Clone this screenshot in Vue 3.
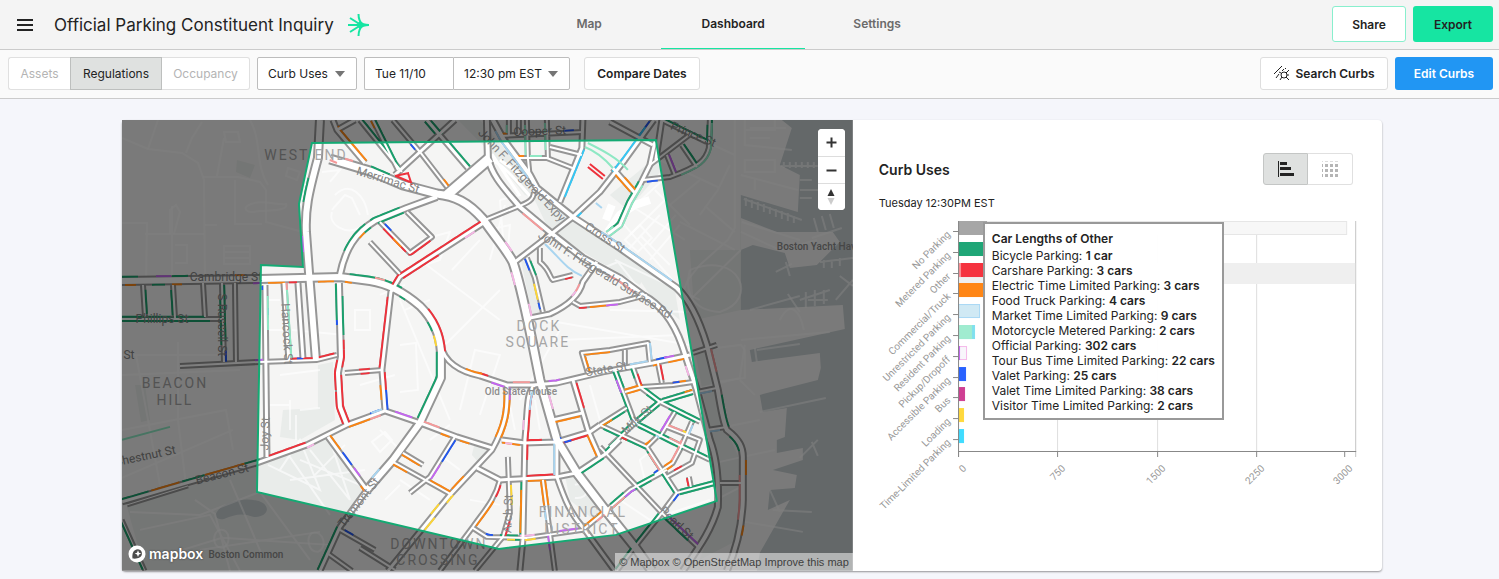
<script setup>
import { ref } from 'vue'

const tabs = ['Map', 'Dashboard', 'Settings']
const activeTab = ref('Dashboard')

const layers = ['Assets', 'Regulations', 'Occupancy']
const activeLayer = ref('Regulations')

const date = ref('Tue 11/10')
const view = ref('bars')

// study area outline
const area = 'M312 143L656 140L717 501L616 535L499 549L257 492L261 265L303 267L299 204Z'

// base map
const water =
  'M782 120L792 128L780 165L800 175L798 212L741 195L741 310L843 305L845 329L750 350L752 362L820 353L821 368L818 380L760 395L763 412L787 408L785 437L777 440L777 453L803 448L803 460L773 470L797 475L795 488L770 490L768 510L790 500L760 553L757 571H853V120Z'
const piers =
  'M741 218L777 232L833 232L840 242L817 265L790 268L785 253L753 245L741 250Z'
const parks = [
  'M127 507L257 464L328 439L366 488L320 571H145Z',
  'M530 190L575 218L622 250L645 275L640 285L600 262L550 232Z',
  'M318 365L333 362L335 420L300 440L280 437L283 410L318 408Z',
  'M458 120H480L530 178L540 200L525 195L488 150Z',
  'M620 250L675 290L680 320L650 295Z',
  'M521 260L527 262L543 312L532 314Z',
  'M564 470L575 474L605 510L600 525L570 500Z',
  'M695 350L708 348L722 420L740 460L738 540L700 560L722 500L712 440Z',
  'M475 442L490 448L480 464L472 455Z',
  'M237 160L255 165L250 178L236 172Z',
  'M135 385L145 385L150 420L141 422Z',
  'M690 250L741 250V310L695 320Z',
  'M610 195L655 158L662 170L628 210Z'
]

const lanes = [
  'M122 138L148 149L182 153L198 163L204 180L205 283',
  'M148 149L158 120M186 153L192 138L202 122',
  'M203 177H238L260 182L266 190V222L303 232',
  'M217 176L224 138M224 132L238 132L240 142L226 142Z',
  'M122 223H147L146 285M145 234H204M172 206V283',
  'M170 234V210L176 205L180 212L174 234',
  'M247 206C258 198 280 206 286 204C290 212 262 210 254 212C246 213 244 208 247 206',
  'M288 168L300 172L297 180L286 176ZM235 180V224H262M250 120C262 140 255 165 268 185',
  'M224 246H250V264H224ZM224 252H250M224 258H250M175 245H187V263H175M205 225H217',
  'M122 355H222M122 375L240 370M122 430L226 410L233 450M122 478L233 430M178 342V420L186 485M136 355L160 485',
  'M130 512L200 515L260 492L310 560M140 530L210 515L240 571M150 560L222 538L330 545M195 500L215 514L230 571M200 550L320 532M230 480L262 555',
  'M220 530C230 528 232 546 222 548C212 548 212 532 220 530M312 533C324 530 328 548 318 552C308 552 306 538 312 533',
  'M735 120V228L728 240L700 265L688 280L680 300M735 155L663 122M730 165L718 190L700 215M705 206L735 232M680 222L735 250M700 180L670 205M660 160L720 188',
  'M745 120V145L792 150M750 128H786M745 160V172H775V160ZM741 175L798 190M755 190V178M742 222L800 240M741 232L780 250L817 240M745 130H775V120M750 138H770',
  'M744 199L802 220M746 198V206M752 200V208M758 202V210M764 204V212M770 207V214M776 209V217M782 211V219M788 213V221M794 216V223',
  'M781 166H818M784 162V168M790 162V168M796 162V168M802 162V168M808 162V168M814 162V168M800 180H812M800 190H828M800 198H812',
  'M812 238L842 228M818 232L814 218M826 230L822 216M834 228L830 214M820 262L853 258M824 260V268M832 260V268M840 258V266M776 272L792 264M790 276L786 262',
  'M800 300L830 290M806 292V308M815 290V306M824 290V304M808 300H828M788 294L800 312M836 300L853 280M840 276L853 286',
  'M750 310L800 296M741 340L830 332M780 320C790 300 800 310 804 330M690 300L741 250M690 270C740 250 760 300 720 312C690 310 685 290 690 270',
  'M693 390L740 378L745 345M710 430L760 420M740 380L755 395M720 462L775 450M716 500L745 485M770 490L780 512M773 510L812 512M745 522L803 532M800 458L818 440M812 442L818 456M760 412L826 398',
  'M700 350L741 345L745 350V378L715 382M755 348L757 362M757 350L800 344',
  'M332 210L345 195L352 198L360 215M332 212C328 225 345 235 360 228M322 172L340 170L330 182M335 195C350 180 365 195 368 215',
  'M380 295L405 285M400 300L450 420M420 240L450 232L440 260L410 270M420 260L500 320M440 350L500 290M460 410L475 350L500 355L480 415',
  'M452 270L480 240M400 345L416 343L418 390L400 392M405 310L430 300M500 200L505 260M505 205L490 260M488 230L510 225L508 250',
  'M505 175L520 195L500 200M520 400L560 330M545 320L690 345M560 340L680 335M615 260L700 300M610 310L690 312M598 270L618 262L640 290',
  'M620 220L690 300M630 205L685 240M640 235L670 265M628 250L660 215M650 260L680 225M625 240L640 225L652 238L638 252Z',
  'M655 190L690 225M665 200L630 235M663 180L625 215M676 215L650 245',
  'M292 330L345 335M262 300H280M265 330H285M267 405H290M300 410L320 408M280 375L320 370M290 400V430M296 415V440',
  'M268 465L320 490L300 440L280 470M310 450L350 500L330 440M290 480L365 470M315 475L345 445M300 460L360 485M285 450L330 515',
  'M355 310H370V330H355ZM360 385L395 375M380 430L400 450L390 470M372 442L385 432L392 440L380 452ZM400 480L430 500M385 500L400 485',
  'M430 440L450 425M440 455L460 470M510 405L515 430M535 400L540 430M590 385L600 420M470 500L500 505M480 520L490 500',
  'M640 460L652 450L660 470L645 480ZM620 500L650 520L710 500M575 485C590 480 592 500 575 498'
]

// [centre line, width]
const roads = [
  ['M320 120L318 158C308 195 305 210 306 232L309 272L316 360', 10],
  ['M122 281L260 279L340 277L370 281C390 284 405 293 420 306C434 320 440 335 441 352V378L420 423L393 460L367 490', 10],
  ['M340 275C345 250 355 233 375 221L407 208L437 197', 8],
  ['M330 159L370 171L403 185L437 194C455 196 468 202 483 219C500 243 508 252 513 262C521 285 526 312 533 345L540 380L557 440L577 473L603 507L635 547L652 571', 11],
  ['M490 158L447 195', 13],
  ['M487 120L488 158C493 178 506 190 520 207L550 232L583 258L620 278L643 295C660 304 674 322 682 345L697 390L710 440C717 458 719 480 718 507C712 530 698 549 683 571', 8],
  ['M493 120L504 140L530 175L537 188L573 217L620 248L677 288C690 300 700 322 707 345L718 390C722 415 724 424 727 430C740 440 743 448 743 457V500C742 530 735 553 727 571', 8],
  ['M333 120L337 130L365 163M337 130L355 120', 7],
  ['M360 120L402 172M373 120L398 170M393 120L420 152L447 187', 6],
  ['M427 120L468 168M455 120L420 152L395 175', 7],
  ['M583 120L582 148L560 202', 7],
  ['M527 120L528 158L530 178M547 120L548 158M500 136L583 132M509 120V135M519 120V135', 6],
  ['M517 158H547L575 169M550 147L582 155', 6],
  ['M515 262L550 235L573 217L600 192L625 160L654 120', 7],
  ['M485 220L517 207C528 203 534 200 534 192', 6],
  ['M485 222L400 277L391 292L382 370L385 410', 7],
  ['M370 242L400 274M380 222L410 253L432 237L407 212', 6],
  ['M527 258L535 278L543 312M540 248V262C550 270 550 278 553 280L573 275', 6],
  ['M530 318L550 314C570 305 580 294 583 282L597 262', 7],
  ['M573 302L580 306L620 302L647 295', 6],
  ['M655 142L650 165L640 185L630 202L620 225L608 234M662 120L656 160', 7],
  ['M613 168L635 193M610 122L653 145', 7],
  ['M662 120L707 142M710 120L709 148C706 160 700 166 670 177L643 180', 6],
  ['M692 133L650 165M682 145L697 167M667 155L675 175', 6],
  ['M143 285L145 317M173 285L175 318M203 283L205 317M122 319H222M222 283L224 362M235 283L236 362', 6],
  ['M180 366L260 362L317 360L337 355', 6],
  ['M265 285L267 457M284 283L289 362M298 283L303 358', 7],
  ['M339 283L341 357L338 373L340 407L347 425', 8],
  ['M345 373L382 370', 6],
  ['M122 502L180 485L257 463L307 445L347 425L385 411L420 423L457 437L492 448', 7],
  ['M122 520L145 571M127 505L188 486', 5],
  ['M328 437L367 490L340 527L320 571', 7],
  ['M340 530L375 550M327 553L352 571M360 548L395 570', 6],
  ['M441 345C444 362 460 372 480 376L507 385L533 385L557 383L603 372L653 363L690 355', 7],
  ['M507 385C508 410 506 425 492 450L450 495L388 571', 7],
  ['M535 385C526 392 528 410 525 440L523 540L520 571', 7],
  ['M502 440L525 443L557 442L590 432L600 425', 7],
  ['M573 380L588 430L600 457M553 420L583 413', 7],
  ['M403 453L423 465M393 462L452 495M455 437L430 477L410 493', 6],
  ['M477 468L500 480L557 477L577 473L607 453L620 440', 7],
  ['M500 480C495 500 485 510 473 527L440 571M473 528L487 537L527 538L583 530L607 510L630 490L667 470', 6],
  ['M508 457L510 513L503 537L475 571M543 480L555 571', 6],
  ['M557 443V477C565 500 570 513 585 530L615 571', 7],
  ['M588 373L582 353L610 350L648 343L650 363M625 350V365', 6],
  ['M633 367L640 387L660 402L700 422M658 363L662 383M625 392L642 387L673 385L693 382', 6],
  ['M615 370L635 423M693 392L660 402L635 423L610 447M635 423L683 447L710 460', 6],
  ['M600 425L627 408M600 425L647 447L657 437M647 447L677 493L715 483', 6],
  ['M675 412L660 437M692 422L680 450L673 463L655 475M667 427L700 440L692 463L667 477', 6],
  ['M600 447L662 513L698 547M677 493L662 513L635 547L617 571', 6],
  ['M693 353L717 345M697 392L717 388M707 430L727 427M720 483H742M689 477L691 487', 6]
]

// curb rules, drawn along the kerb lines
const curbs = {
  green: [
    'M122 277H138M172 277L188 276M152 285L165 286M309 178L304 202M366 225C353 236 350 245 347 252M372 229C364 238 360 246 357 253',
    'M362 120L393 158M372 122L402 168M425 120L436 133M432 120L442 134M448 142L469 168M370 220L400 208M378 223L404 213M371 167L390 174',
    'M350 272C390 276 395 284 402 288M398 299C412 309 424 322 430 332M336 284L337 320M344 296V335M436 352V372L418 418',
    'M143 290L146 314M173 290L175 315M220 300L221 345M225 285L226 340M122 317H205M122 321H210M664 120L707 140M712 120V140M683 145L696 165',
    'M530 261L534 276M535 270L537 258M642 183L612 232M521 482L522 535M583 495L600 482M579 477L605 460M601 424L625 412M603 430L645 451',
    'M613 372L632 420M616 368L623 388M632 368L636 378M644 386L700 420M648 393L658 401M692 390L662 398M693 394L664 402M657 402L637 419M661 407L638 428',
    'M630 424L618 436M638 422L680 442M638 427L682 451M604 450L618 440M645 453L674 493M680 490L714 481M680 494L714 485',
    'M610 508L650 478M668 466L636 482M610 504L624 493M644 449L628 444M667 412L693 427M684 446L706 459',
    'M659 514L610 570M665 517L688 541M721 395L726 428M731 435L743 450M705 142L710 125M122 501L149 493M183 484L205 477M245 466L260 460M122 518L140 571M338 527L319 571M656 518L640 536M500 536L518 535M508 541L520 540'
  ],
  red: [
    'M485 220L440 246L398 276M438 254L403 278M390 297L383 345L381 368M386 300L380 350M384 228L406 252M408 255L430 240M400 277L391 285',
    'M427 310C438 320 442 335 446 352M269 457L306 444M290 362L335 356M292 358L320 358M344 350L345 368M337 360V390M341 375V390L347 424M336 392L343 424M359 370H370M361 378H370',
    'M565 278L572 276M580 307L587 307M387 372L386 390M529 415L527 460M531 395L529 425M528 440H542M563 440L588 434M565 446L587 436M576 383L584 408',
    'M527 477L555 475M500 485L494 496M512 522L508 537M637 374L642 386M660 365L663 380M620 440L626 443M675 472L683 468M688 478L690 486M478 374L488 377M341 340V350M289 282H297'
  ],
  orange: [
    'M125 286H136M172 284H182M235 275H245M268 283L285 282M318 281L334 280M345 281L352 282M366 234L362 240M393 239L401 247M443 180L448 186M517 158L524 157M546 246L562 266M590 307L612 304',
    'M614 172L630 192M624 178L635 192M338 126L365 162M344 130L360 152M512 156H524M505 390C505 410 506 425 498 438M509 395C510 410 508 425 502 438M502 444L520 445M466 369L482 375M441 433L450 436',
    'M553 423L580 416M589 435L597 456M583 354L610 350M583 357L588 372M625 391L642 386M627 395L640 390M673 384L686 381M685 393L693 391M668 361L684 358M400 455L420 465M393 464L408 471M430 481L450 493',
    'M453 490L466 478M492 500L475 525M541 482L547 505M546 480L551 505M522 490L523 533M528 481L543 480M609 510L585 526M644 446L650 440M665 467L675 461M663 470L672 465M349 427L370 418M328 437L340 450M362 485L367 490M370 121L375 128M600 430L615 424M180 484L152 493M205 475L245 466M743 460L744 475M741 525L739 535M500 136L507 135M383 385V400M461 438L470 442M653 365H660'
  ],
  blue: [
    'M305 120L314 132M411 144L415 150M384 225L390 232M527 258L531 270M538 303L541 309M265 286V290M266 308V315M297 358H303M338 320V325M386 390L387 410M370 413L380 412',
    'M448 454L455 440M450 451L444 463M553 440H562M565 444L572 442M343 452L352 465M487 532L493 537M647 181L658 181M648 120L638 135M656 359L667 357M673 384H680M618 440L612 447M672 500L680 495M345 530L353 536M480 552L472 565M500 566L508 558M563 128L574 131M636 120L630 133M225 350V362M654 473H660'
  ],
  purple: [
    'M156 275H171M303 236L304 252M253 283H262M255 362H263M395 412L412 418M440 465L430 478M549 383L560 380M511 387V400M354 468L360 476M668 155L676 172M663 432L671 416M664 357L674 355M626 498L636 490M560 534L578 529M550 535L552 550M667 517L698 545M606 303H618M492 381L505 385M616 380L621 393'
  ],
  pink: [
    'M465 238L475 232M505 242L511 252M512 272L516 285M528 304L532 316M307 448L314 444M546 395L550 410M689 365L691 375M505 445L512 446M523 420V430M577 285L574 298M389 128L394 138M520 537L535 536'
  ],
  salmon: [
    'M345 159L353 161M523 213L543 230M375 278L385 280M610 274L635 290M577 292L582 285M420 420L440 427M513 384L530 382M668 425L683 431M670 437L683 442M682 440L675 462M651 452L660 475M610 505L625 497M370 418L380 413M284 283L286 290M708 350L716 372M743 475L740 520M130 515L134 530M616 512L600 525'
  ],
  mint: [
    'M287 290L291 358M270 296V330M640 184L632 205L620 226L608 234M525 125V155M530 157H542M606 235L614 227M710 123V145C707 160 700 165 680 172M547 123V150M506 125V133'
  ],
  sky: [
    'M494 132L528 178M602 231L620 244M620 244L672 281M371 412L382 409M556 443V475M704 330L716 345L712 388M649 343V360M372 478L378 468M630 365L648 362M694 395L712 390M707 432L720 429M655 437L662 433M690 424L688 436M531 388L529 410M546 510L548 520'
  ],
  cyan: ['M585 150L565 197M645 127L625 156M578 217L582 213M640 140L613 172'],
  yellow: ['M534 284L537 300M433 336L436 346M510 485L511 505M453 495L447 503M434 517L425 530M683 431L686 434M507 543L515 542M525 541L536 540M440 505L432 515']
}

// rules that sit off the kerb lines
const extras = {
  red: 'M588 167L603 179M590 164L605 176M395 176L409 173M408 173L412 185M396 176L410 182',
  mint: 'M588 143C602 150 618 158 628 170M585 147C598 152 606 160 613 168M122 440L170 427',
  sky: 'M545 244C560 258 565 268 582 276M596 203L602 208',
  salmon: 'M330 160L337 163'
}

const parsePath = (d) => {
  const lines = []
  const tokens = d.match(/[A-Z]|[\d.]+/g)
  let line, x, y, cmd
  for (let i = 0; i < tokens.length; ) {
    if (/[A-Z]/.test(tokens[i])) cmd = tokens[i++]
    const n = () => Number(tokens[i++])
    if (cmd == 'C') {
      const [x1, y1, x2, y2, x3, y3] = [n(), n(), n(), n(), n(), n()]
      for (let k = 1; k <= 8; k++) {
        const t = k / 8
        const u = 1 - t
        line.push([
          u * u * u * x + 3 * u * u * t * x1 + 3 * u * t * t * x2 + t * t * t * x3,
          u * u * u * y + 3 * u * u * t * y1 + 3 * u * t * t * y2 + t * t * t * y3
        ])
      }
      x = x3
      y = y3
      continue
    }
    if (cmd != 'V') x = n()
    if (cmd != 'H') y = n()
    if (cmd == 'M') {
      line = []
      lines.push(line)
    }
    line.push([x, y])
  }
  return lines
}

const streets = roads.flatMap(([d, width]) => parsePath(d).map((line) => ({ line, width })))

const nearest = (line, [px, py]) => {
  let best = { dist: Infinity }
  for (let i = 1; i < line.length; i++) {
    const [ax, ay] = line[i - 1]
    const dx = line[i][0] - ax
    const dy = line[i][1] - ay
    const len = Math.hypot(dx, dy)
    const t = Math.min(1, Math.max(0, ((px - ax) * dx + (py - ay) * dy) / (len * len)))
    const x = ax + dx * t
    const y = ay + dy * t
    const dist = Math.hypot(px - x, py - y)
    if (dist < best.dist) {
      const nx = -dy / len
      const ny = dx / len
      best = { dist, x, y, nx, ny, side: (px - x) * nx + (py - y) * ny }
    }
  }
  return best
}

// puts a curb rule on the kerb of the street next to it
const snap = (line) => {
  const points = [line[0]]
  for (let i = 1; i < line.length; i++) {
    const [ax, ay] = line[i - 1]
    const [bx, by] = line[i]
    const steps = Math.ceil(Math.hypot(bx - ax, by - ay) / 4)
    for (let k = 1; k <= steps; k++) {
      points.push([ax + ((bx - ax) * k) / steps, ay + ((by - ay) * k) / steps])
    }
  }
  let best = { worst: Infinity }
  for (const street of streets) {
    const hits = points.map((p) => nearest(street.line, p))
    const worst = Math.max(...hits.map((h) => h.dist))
    if (worst < best.worst) best = { worst, hits, width: street.width }
  }
  if (best.worst > 8) {
    return line.length > 2 ? line.slice(1).map((p, i) => snap([line[i], p])).join('') : ''
  }
  const side = Math.sign(best.hits.reduce((sum, h) => sum + h.side, 0)) || 1
  const off = side * (best.width / 2 - 0.9)
  return 'M' + best.hits.map((h) => `${(h.x + h.nx * off).toFixed(1)} ${(h.y + h.ny * off).toFixed(1)}`).join('L')
}

const curbPaths = Object.entries(curbs).map(([name, paths]) => ({
  name,
  d: paths.flatMap(parsePath).map(snap).join('')
}))

const places = [
  { text: 'WEST END', x: 306, y: 160, type: 'district' },
  { text: 'DOCK', x: 539, y: 331, type: 'district' },
  { text: 'SQUARE', x: 538, y: 347, type: 'district' },
  { text: 'BEACON', x: 175, y: 388, type: 'district' },
  { text: 'HILL', x: 175, y: 405, type: 'district' },
  { text: 'FINANCIAL', x: 583, y: 517, type: 'district' },
  { text: 'DISTRICT', x: 582, y: 534, type: 'district' },
  { text: 'DOWNTOWN', x: 439, y: 549, type: 'district' },
  { text: 'CROSSING', x: 438, y: 565, type: 'district' },
  { text: 'Boston Yacht Haven', x: 822, y: 250, type: 'poi' },
  { text: 'Old State House', x: 521, y: 395, type: 'poi' },
  { text: 'Boston Common', x: 246, y: 558, type: 'poi' },
  { text: 'Cambridge St', x: 226, y: 281, type: 'street' },
  { text: 'Phillips St', x: 162, y: 323, type: 'street' },
  { text: 'St', x: 129, y: 359, type: 'street' },
  { text: 'Merrimac St', x: 387, y: 184, type: 'street', turn: 17 },
  { text: 'Joy St', x: 269, y: 434, type: 'street', turn: -88 },
  { text: 'Beacon St', x: 223, y: 478, type: 'street', turn: -14 },
  { text: 'Chestnut St', x: 146, y: 460, type: 'street', turn: -12 },
  { text: 'Hancock St', x: 283, y: 334, type: 'street', turn: 87 },
  { text: 'S Russell St', x: 218, y: 325, type: 'street', turn: 90 },
  { text: 'Tremont St', x: 362, y: 505, type: 'street', turn: -52 },
  { text: 'Arch St', x: 512, y: 514, type: 'street', turn: -88 },
  { text: 'State St', x: 607, y: 373, type: 'street', turn: -9 },
  { text: 'Milk St', x: 640, y: 423, type: 'street', turn: -42 },
  { text: 'Cooper St', x: 540, y: 135, type: 'street', turn: -2 },
  { text: 'Prince St', x: 692, y: 138, type: 'street', turn: 22 },
  { text: 'Pearl St', x: 674, y: 526, type: 'street', turn: 44 },
  { text: 'Cross St', x: 603, y: 241, type: 'street', turn: 33 },
  { text: 'John F. Fitzgerald Expy', x: 519, y: 178, type: 'street', turn: 47 },
  { text: 'John F. Fitzgerald Surface Rd', x: 603, y: 278, type: 'street', turn: 32 }
]

const uses = [
  { name: 'No Parking', parts: [[388, '#f7f7f7', '#e6e6e6'], [28, '#a6a6a6']] },
  { name: 'Metered Parking', parts: [[70, '#cfe6ef'], [27, '#1fa677']] },
  { name: 'Other', parts: [[42, '#f9b3a6'], [27, '#f5333f'], [2, '#fa8f94']] },
  { name: 'Commercial/Truck', parts: [[42, '#f9b3a6'], [27, '#ff8616']] },
  { name: 'Unrestricted Parking', parts: [[21, '#d0e9f4', '#a9d8f5']] },
  { name: 'Resident Parking', parts: [[16, '#7fe0ef'], [13, '#a0ecd0']] },
  { name: 'Pickup/Dropoff', parts: [[8, '#f8f6fb', '#f5b9ea'], [1, '#c466f0']] },
  { name: 'Accessible Parking', parts: [[7, '#2962ff']] },
  { name: 'Bus', parts: [[6, '#cf3f93']] },
  { name: 'Loading', parts: [[5, '#ffd93d']] },
  { name: 'Time-Limited Parking', parts: [[5, '#40dcff']] }
]

const rowY = (i) => Math.round(221 + i * 20.8)

const ticks = [
  { label: '0', x: 958 },
  { label: '750', x: 1057 },
  { label: '1500', x: 1157 },
  { label: '2250', x: 1256 },
  { label: '3000', x: 1344 }
]

const other = [
  ['Bicycle Parking', '1 car'],
  ['Carshare Parking', '3 cars'],
  ['Electric Time Limited Parking', '3 cars'],
  ['Food Truck Parking', '4 cars'],
  ['Market Time Limited Parking', '9 cars'],
  ['Motorcycle Metered Parking', '2 cars'],
  ['Official Parking', '302 cars'],
  ['Tour Bus Time Limited Parking', '22 cars'],
  ['Valet Parking', '25 cars'],
  ['Valet Time Limited Parking', '38 cars'],
  ['Visitor Time Limited Parking', '2 cars']
]
</script>

<template>
  <div class="page">
    <header class="topbar">
      <div class="brand">
        <button class="menu" aria-label="Menu">
          <svg width="18" height="14" viewBox="0 0 18 14"><path d="M1 2H17M1 7H17M1 12H17" /></svg>
        </button>
        <h1>Official Parking Constituent Inquiry</h1>
        <svg class="logo" width="22" height="22" viewBox="0 0 22 22">
          <path d="M0 11H16M2 4L13 11L2 18M10.500 0C10.500 5 11.500 8 15 11C11.500 14 10.500 17 10.500 22" />
          <path class="tip" d="M8 11L12 7C14 9 17 10 21 10V12C17 12 14 13 12 15Z" />
        </svg>
      </div>
      <nav>
        <a v-for="tab in tabs" :key="tab" href="#" :class="{ active: tab == activeTab }" @click.prevent="activeTab = tab">{{ tab }}</a>
      </nav>
      <div class="actions">
        <button class="share">Share</button>
        <button class="export">Export</button>
      </div>
    </header>

    <div class="toolbar">
      <div class="segment">
        <button v-for="layer in layers" :key="layer" :class="{ active: layer == activeLayer }" @click="activeLayer = layer">{{ layer }}</button>
      </div>
      <div class="picker uses">
        <select aria-label="Layer"><option>Curb Uses</option></select>
        <svg width="10" height="6" viewBox="0 0 10 6"><path d="M0 0H10L5 6Z" /></svg>
      </div>
      <div class="when">
        <input v-model="date" aria-label="Date" type="text" />
        <div class="picker time">
          <select aria-label="Time"><option>12:30 pm EST</option></select>
          <svg width="10" height="6" viewBox="0 0 10 6"><path d="M0 0H10L5 6Z" /></svg>
        </div>
      </div>
      <button class="plain compare">Compare Dates</button>
      <button class="plain search">
        <svg width="16" height="16" viewBox="0 0 16 16">
          <path d="M0 9L8 1M2 13L5 9M8 6L10 4M11 4L12 3" />
          <circle cx="10" cy="10" r="3" />
          <path d="M12 12L15 15M8 12L6 15M7 8L5 7M12 8L15 5M13 10H15" />
        </svg>
        Search Curbs
      </button>
      <button class="edit">Edit Curbs</button>
    </div>

    <main>
      <section class="card">
        <div class="map">
          <svg class="canvas" viewBox="122 120 731 451" preserveAspectRatio="xMidYMid slice">
            <rect class="land" x="122" y="120" width="731" height="451" />
            <path v-for="park in parks" :key="park" class="park" :d="park" />
            <path class="water" :d="water" />
            <path class="land" :d="piers" />
            <path class="water" d="M216 514C222 500 250 496 263 503C272 510 264 518 254 517C242 513 236 514 224 519C218 520 215 518 216 514Z" />
            <path v-for="lane in lanes" :key="lane" class="lane" :d="lane" />
            <path class="ramp" d="M488 158C505 165 520 185 530 196M492 154L520 196M500 160L535 185" />
            <path class="ramp wide" d="M608 232L620 215L635 205L650 200M612 205L606 220" />
            <path v-for="road in roads" :key="road[0]" class="kerb" :d="road[0]" :stroke-width="road[1]" />
            <path v-for="curb in curbPaths" :key="curb.name" :class="['curb', curb.name]" :d="curb.d" />
            <path v-for="road in roads" :key="road[0]" class="surface" :d="road[0]" :stroke-width="road[1] - 4" />
            <path v-for="(d, name) in extras" :key="name" :class="['curb', name]" :d="d" />
            <text
              v-for="place in places"
              :key="place.text"
              :class="place.type"
              :x="place.x"
              :y="place.y"
              :transform="place.turn ? `rotate(${place.turn} ${place.x} ${place.y})` : null"
            >{{ place.text }}</text>
            <path class="shade" :d="'M122 120H853V571H122Z' + area" />
            <path class="outline" :d="area" />
          </svg>

          <div class="zoom">
            <button aria-label="Zoom in"><svg width="11" height="11" viewBox="0 0 11 11"><path d="M5.5 0.5V10.5M0.5 5.5H10.5" /></svg></button>
            <button aria-label="Zoom out"><svg width="11" height="11" viewBox="0 0 11 11"><path d="M0.5 5.5H10.5" /></svg></button>
            <button aria-label="Reset north">
              <svg width="8" height="16" viewBox="0 0 8 16"><path class="north" d="M4 0L7.5 7H.5Z" /><path class="south" d="M4 16L7.5 9H.5Z" /></svg>
            </button>
          </div>

          <a class="mapbox" href="#">
            <svg width="18" height="18" viewBox="0 0 18 18">
              <circle cx="9" cy="9" r="8.5" />
              <path class="drop" d="M4.500 13.500C4 9 5 4.500 10 4.300C15 5 15 11 11.500 12.600C9.500 13.700 7 13.800 4.500 13.500Z" />
              <path class="star" d="M10 5.300L11 7.700L13.300 8.600L11 9.600L10 12L9 9.600L6.700 8.600L9 7.700Z" />
            </svg>
            <span>mapbox</span>
          </a>

          <div class="credits">
            <a href="#">© Mapbox</a> <a href="#">© OpenStreetMap</a> <a href="#">Improve this map</a>
          </div>
        </div>

        <div class="panel">
          <div class="panel-head">
            <h2>Curb Uses</h2>
            <div class="toggle">
              <button aria-label="Bar chart" :class="{ active: view == 'bars' }" @click="view = 'bars'">
                <svg width="18" height="18" viewBox="0 0 18 18"><path class="bars" d="M1 1H2V17H1ZM3 2H10V5H3ZM3 7H14V10H3ZM3 13H17V16H3Z" /></svg>
              </button>
              <button aria-label="Heat map" :class="{ active: view == 'grid' }" @click="view = 'grid'">
                <svg width="16" height="16" viewBox="0 0 16 16">
                  <path class="dots" d="M0 4.500H16M0 9.500H16M0 14.500H16" />
                  <path class="dots faint" d="M0 .5H16" />
                </svg>
              </button>
            </div>
          </div>
          <p class="moment">Tuesday 12:30PM EST</p>

          <div class="chart">
            <svg viewBox="853 214 529 300">
              <g class="grid">
                <path d="M1057.500 221V451M1157.500 221V451M1256.500 221V451" />
                <path class="last" d="M1355.500 221V457" />
              </g>
              <rect class="hover" x="958" y="263" width="397" height="21" />
              <g v-for="(use, i) in uses" :key="use.name">
                <rect
                  v-for="part in use.parts"
                  :key="part[0]"
                  x="958.5"
                  :y="rowY(i) + .5"
                  :width="part[0]"
                  height="13"
                  :fill="part[1]"
                  :stroke="part[2] || part[1]"
                />
                <path class="tick" :d="`M953 ${rowY(i) + 10.5}H958`" />
                <text x="951" :y="rowY(i) + 14" :transform="`rotate(-45 951 ${rowY(i) + 14})`">{{ use.name }}</text>
              </g>
              <path class="axis" d="M958.500 221V457M958 451.500H1356" />
              <g v-for="tick in ticks" :key="tick.label">
                <path class="tick" :d="`M${tick.x + .5} 451V457`" />
                <text :x="tick.x + 9" y="469" :transform="`rotate(-45 ${tick.x + 9} 469)`">{{ tick.label }}</text>
              </g>
            </svg>
            <div class="tooltip">
              <h3>Car Lengths of Other</h3>
              <p v-for="row in other" :key="row[0]">{{ row[0] }}: <b>{{ row[1] }}</b></p>
            </div>
          </div>
        </div>
      </section>
    </main>
  </div>
</template>

<style>
body {
  background: #f5f6fb;
}
</style>

<style scoped>
.page,
.page button,
.page input,
.page select {
  font-family: Inter, 'Liberation Sans', sans-serif;
  font-size: 12px;
  color: #232323;
}

.page * {
  box-sizing: border-box;
}

h1,
h2,
h3,
p {
  margin: 0;
}

button {
  padding: 0;
  cursor: pointer;
}

.topbar {
  display: grid;
  grid-template-columns: 34.5% auto 1fr;
  height: 50px;
  background: #f4f4f4;
  border-bottom: 1px solid #cbcbcb;
}

.brand {
  display: flex;
  align-items: center;
  padding-left: 16px;
}

.menu {
  display: flex;
  margin-right: 20px;
  border: none;
  background: none;
}

.menu svg {
  stroke: #232323;
  stroke-width: 2;
}

.page h1 {
  font-size: 17px;
  font-weight: 400;
  white-space: nowrap;
}

.logo {
  margin-left: 14px;
  fill: none;
  stroke: #16e5a2;
  stroke-width: 2;
}

.logo .tip {
  fill: #16e5a2;
  stroke: none;
}

nav {
  display: flex;
}

nav a {
  width: 144px;
  line-height: 48px;
  text-align: center;
  font-weight: 600;
  color: #6b6b6b;
  text-decoration: none;
}

nav a.active {
  color: #232323;
  border-bottom: 1px solid #16e5a2;
}

.actions {
  display: flex;
  justify-content: flex-end;
  gap: 7px;
  padding: 6px 6px 7px;
}

.actions button {
  border-radius: 3px;
  font-weight: 600;
}

.actions .share {
  width: 74px;
  background: #fff;
  border: 1px solid #88efcd;
}

.actions .export {
  width: 80px;
  background: #16e5a2;
  border: none;
}

.toolbar {
  display: flex;
  align-items: center;
  height: 49px;
  padding: 0 6px 2px 8px;
  background: #fafafa;
  border-bottom: 1px solid #cbcbcb;
}

.segment {
  display: flex;
  margin-right: 7px;
}

.segment button {
  width: 88px;
  height: 33px;
  background: #fff;
  border: 1px solid #e0e0e0;
  color: #b4b4b4;
}

.segment button:first-child {
  width: 62px;
  border-radius: 3px 0 0 3px;
  border-right: none;
}

.segment button:last-child {
  border-radius: 0 3px 3px 0;
  border-left: none;
}

.segment button.active {
  width: 92px;
  background: #dfe1e0;
  border-color: #bdbfbe;
  color: #232323;
}

.picker {
  position: relative;
}

.picker svg {
  position: absolute;
  right: 12px;
  top: 14px;
  fill: #757575;
  pointer-events: none;
}

.picker select,
.when input {
  width: 100%;
  height: 33px;
  padding: 0 10px;
  appearance: none;
  background: #fff;
  border: 1px solid #bdbdbd;
  border-radius: 2px;
}

.uses {
  width: 100px;
  margin-right: 7px;
}

.when {
  display: flex;
  margin-right: 14px;
}

.when input {
  width: 89px;
  border-right: none;
  border-radius: 2px 0 0 2px;
}

.time {
  width: 117px;
}

.time select {
  border-radius: 0 2px 2px 0;
}

.plain {
  height: 33px;
  background: #fff;
  border: 1px solid #dedede;
  border-radius: 3px;
  font-weight: 600;
}

.compare {
  width: 116px;
}

.search {
  display: flex;
  align-items: center;
  justify-content: center;
  gap: 6px;
  width: 128px;
  margin-left: auto;
  margin-right: 7px;
}

.search svg {
  fill: none;
  stroke: #232323;
}

.toolbar .edit {
  width: 98px;
  height: 33px;
  background: #2196f3;
  border: none;
  border-radius: 3px;
  color: #fff;
  font-weight: 600;
}

main {
  padding: 21px 117px 8px 122px;
}

.card {
  display: flex;
  background: #fff;
  border-radius: 4px;
  box-shadow: 0 1px 2px rgba(0, 0, 0, 0.4);
}

.map {
  position: relative;
  width: 58%;
  overflow: hidden;
}

.canvas {
  display: block;
  width: 100%;
  height: 100%;
}

.land {
  fill: #f5f5f4;
}

.park {
  fill: #e9ecea;
}

.water {
  fill: #c8d0d3;
}

.lane {
  fill: none;
  stroke: #fff;
  stroke-opacity: 0.6;
  stroke-width: 2;
}

.ramp {
  fill: none;
  stroke: #fff;
  stroke-width: 3;
}

.ramp.wide {
  stroke-width: 8;
}

.kerb,
.surface {
  fill: none;
  stroke: #969696;
  stroke-linejoin: round;
}

.surface {
  stroke: #fff;
}

.curb {
  fill: none;
  stroke-width: 2;
}

.green {
  stroke: #1aa06d;
}

.red {
  stroke: #ee323c;
}

.orange {
  stroke: #f98514;
}

.blue {
  stroke: #2257ee;
}

.purple {
  stroke: #c466f0;
}

.pink {
  stroke: #f4b6e4;
}

.salmon {
  stroke: #f59a9a;
}

.mint {
  stroke: #8fe8c4;
}

.sky {
  stroke: #a9d5f0;
}

.cyan {
  stroke: #35c7f5;
}

.yellow {
  stroke: #fdd535;
}

.canvas text {
  font-family: Roboto, 'Liberation Sans', sans-serif;
  text-anchor: middle;
}

.district {
  font-size: 14px;
  letter-spacing: 2px;
  fill: #a6a6a6;
}

.poi {
  font-size: 10px;
  font-weight: 500;
  fill: #8c8c8c;
}

.street {
  font-size: 12px;
  fill: #858585;
}

.shade {
  fill: rgba(0, 0, 0, 0.5);
  fill-rule: evenodd;
}

.outline {
  fill: none;
  stroke: #14aa73;
  stroke-width: 2;
}

.zoom {
  position: absolute;
  top: 9px;
  right: 8px;
  width: 27px;
  border-radius: 4px;
  overflow: hidden;
  background: #fff;
}

.zoom button {
  display: flex;
  align-items: center;
  justify-content: center;
  width: 27px;
  height: 27px;
  background: #fff;
  border: none;
  border-top: 1px solid #ddd;
}

.zoom button:first-child {
  border-top: none;
}

.zoom svg {
  stroke: #333;
  stroke-width: 2;
}

.zoom .north {
  fill: #333;
  stroke: none;
}

.zoom .south {
  fill: #ccc;
  stroke: none;
}

.mapbox {
  position: absolute;
  left: 6px;
  bottom: 8px;
  display: flex;
  align-items: center;
  gap: 3px;
  color: #fff;
  font-size: 14px;
  font-weight: 600;
  line-height: 18px;
  text-decoration: none;
  text-shadow: 0 0 2px #333;
}

.mapbox circle,
.mapbox .star {
  fill: #fff;
}

.mapbox .drop {
  fill: #4c4c4c;
}

.credits {
  position: absolute;
  right: 0;
  bottom: 0;
  padding: 0 4px;
  background: rgba(255, 255, 255, 0.5);
  font-family: 'Liberation Sans', sans-serif;
  font-size: 11px;
  line-height: 18px;
}

.credits a {
  color: #404040;
  text-decoration: none;
}

.panel {
  flex: 1;
  min-width: 0;
}

.panel-head {
  display: flex;
  align-items: center;
  justify-content: space-between;
  padding: 33px 29px 0 26px;
}

.page h2 {
  font-size: 14px;
  font-weight: 600;
}

.toggle {
  display: flex;
}

.toggle button {
  display: flex;
  align-items: center;
  justify-content: center;
  width: 45px;
  height: 32px;
  background: #fff;
  border: 1px solid #e0e0e0;
}

.toggle button:first-child {
  border-radius: 3px 0 0 3px;
}

.toggle button:last-child {
  border-left: none;
  border-radius: 0 3px 3px 0;
}

.toggle button.active {
  background: #dfe1e0;
  border-color: #c4c6c5;
}

.bars {
  fill: #232323;
}

.dots {
  stroke: #b5b5b5;
  stroke-width: 3;
  stroke-dasharray: 3 2;
  stroke-dashoffset: 2;
}

.dots.faint {
  stroke: #ddd;
  stroke-width: 1;
}

.moment {
  padding: 10px 26px 3px;
  font-size: 11px;
  line-height: 16px;
}

.chart {
  position: relative;
}

.chart > svg {
  display: block;
  width: 100%;
}

.grid path {
  stroke: #dedede;
}

.grid .last {
  stroke: #c4c4c4;
}

.hover {
  fill: #efefef;
}

.chart text {
  font-family: Roboto, 'Liberation Sans', sans-serif;
  font-size: 10px;
  fill: #999;
  text-anchor: end;
}

.tick,
.axis {
  fill: none;
  stroke: #888;
}

.tooltip {
  position: absolute;
  left: 130px;
  top: 8px;
  width: 241px;
  padding: 6px 6px 5px 7px;
  background: rgba(255, 255, 255, 0.97);
  border: 2px solid #999;
  line-height: 15px;
  white-space: nowrap;
}

.tooltip h3 {
  font-size: 12px;
  font-weight: 600;
  line-height: 18px;
}

.tooltip b {
  font-weight: 600;
}
</style>
